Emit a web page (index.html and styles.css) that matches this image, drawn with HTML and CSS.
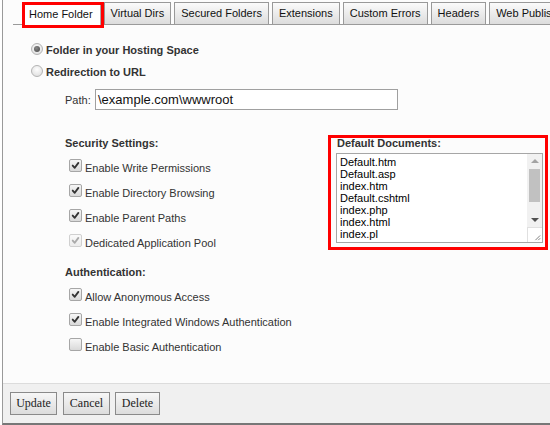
FILE: index.html
```html
<!DOCTYPE html>
<html>
<head>
<meta charset="utf-8">
<link rel="stylesheet" href="styles.css">
</head>
<body>
<div class="frame">
  <div class="tabs">
    <div class="tab active">Home Folder</div>
    <div class="tab">Virtual Dirs</div>
    <div class="tab">Secured Folders</div>
    <div class="tab">Extensions</div>
    <div class="tab">Custom Errors</div>
    <div class="tab">Headers</div>
    <div class="tab">Web Publishing</div>
  </div>
  <div class="content">
    <label class="opt"><span class="radio on"></span><b>Folder in your Hosting Space</b></label>
    <label class="opt"><span class="radio"></span><b>Redirection to URL</b></label>
    <div class="path"><span class="path-label">Path:</span><div class="input">\example.com\wwwroot</div></div>
    <div class="section">
      <div class="left">
        <div class="heading">Security Settings:</div>
        <div class="rows">
          <label class="chk"><span class="cb"><svg viewBox="0 0 13 13"><path d="M3.2 6.6 L5.6 9.2 L9.9 3.4" /></svg></span>Enable Write Permissions</label>
          <label class="chk"><span class="cb"><svg viewBox="0 0 13 13"><path d="M3.2 6.6 L5.6 9.2 L9.9 3.4" /></svg></span>Enable Directory Browsing</label>
          <label class="chk"><span class="cb"><svg viewBox="0 0 13 13"><path d="M3.2 6.6 L5.6 9.2 L9.9 3.4" /></svg></span>Enable Parent Paths</label>
          <label class="chk"><span class="cb disabled"><svg viewBox="0 0 13 13"><path d="M3.2 6.6 L5.6 9.2 L9.9 3.4" /></svg></span>Dedicated Application Pool</label>
        </div>
        <div class="heading auth">Authentication:</div>
        <div class="rows auth-rows">
          <label class="chk"><span class="cb"><svg viewBox="0 0 13 13"><path d="M3.2 6.6 L5.6 9.2 L9.9 3.4" /></svg></span>Allow Anonymous Access</label>
          <label class="chk"><span class="cb"><svg viewBox="0 0 13 13"><path d="M3.2 6.6 L5.6 9.2 L9.9 3.4" /></svg></span>Enable Integrated Windows Authentication</label>
          <label class="chk"><span class="cb off"></span>Enable Basic Authentication</label>
        </div>
      </div>
      <div class="docs">
        <div class="docs-title">Default Documents:</div>
        <div class="textarea">
          <div class="lines">
            <div>Default.htm</div>
            <div>Default.asp</div>
            <div>index.htm</div>
            <div>Default.cshtml</div>
            <div>index.php</div>
            <div>index.html</div>
            <div>index.pl</div>
          </div>
          <div class="scrollbar">
            <div class="sb-btn"><span class="arrow-up"></span></div>
            <div class="sb-track"><div class="sb-thumb"></div></div>
            <div class="sb-btn"><span class="arrow-down"></span></div>
            <div class="sb-corner"><svg viewBox="0 0 15 15"><path d="M13 8 L8 13 M13 11 L11 13" /></svg></div>
          </div>
        </div>
      </div>
    </div>
  </div>
  <div class="footer">
    <button class="btn b-update">Update</button>
    <button class="btn b-cancel">Cancel</button>
    <button class="btn b-delete">Delete</button>
  </div>
</div>
</body>
</html>
```
FILE: styles.css
```css
* { box-sizing: border-box; }
html, body { margin: 0; padding: 0; }
body {
  font-family: "Liberation Sans", Arial, sans-serif;
  font-size: 11px;
  color: #222;
  background: #fff;
  width: 550px;
  height: 425px;
  overflow: hidden;
}
.frame {
  margin-left: 2px;
  height: 425px;
  border-left: 1px solid #9a9a9a;
  border-bottom: 2px solid #777;
  background: #fcfcfc;
  display: flex;
  flex-direction: column;
  overflow: hidden;
}
.tabs {
  display: flex;
  align-items: flex-end;
  height: 25px;
  margin-left: 10px;
  border-bottom: 1px solid #9a9a9a;
  white-space: nowrap;
  flex-shrink: 0;
}
.tab {
  flex-shrink: 0;
  height: 22px;
  line-height: 21px;
  padding: 0 6px;
  margin-right: 3px;
  border: 1px solid #999;
  border-bottom: none;
  background: linear-gradient(#fbfbfb, #dcdcdc);
  color: #111;
}
.tab.active {
  height: 26px;
  margin-left: 9px;
  margin-right: 0;
  margin-bottom: -4px;
  border: 3px solid #f00;
  padding: 0 8px 0 4px;
  line-height: 18px;
  background: #fff;
  position: relative;
  z-index: 1;
  box-shadow: inset -1px 0 0 #aaa;
}
.content {
  flex: 1;
  padding: 14px 0 0 28px;
}
.opt {
  display: flex;
  align-items: center;
  height: 22px;
}
.opt b { color: #333; }
.radio {
  width: 12px;
  height: 12px;
  border-radius: 50%;
  border: 1px solid #b4b4b4;
  background: radial-gradient(circle at 50% 35%, #fdfdfd, #dadada);
  margin-right: 3px;
  margin-bottom: 3px;
  display: flex;
  align-items: center;
  justify-content: center;
}
.radio.on::after {
  content: "";
  width: 6px;
  height: 6px;
  border-radius: 50%;
  background: radial-gradient(circle at 40% 35%, #888, #444);
}
.path {
  display: flex;
  align-items: center;
  margin: 6px 0 0 34px;
  height: 21px;
}
.path-label { width: 30px; color: #333; }
.input {
  width: 303px;
  height: 21px;
  border: 1px solid #a0a0a0;
  background: #fff;
  font-size: 13px;
  line-height: 19px;
  padding-left: 2px;
  color: #111;
}
.section {
  display: flex;
  margin: 25px 0 0 34px;
}
.left { width: 263px; }
.heading {
  font-weight: bold;
  color: #333;
  height: 17px;
  line-height: 17px;
}
.rows { margin-top: 3px; }
.chk {
  display: flex;
  align-items: center;
  height: 25px;
  color: #333;
}
.cb {
  width: 13px;
  height: 13px;
  margin: 0 3px 4px 4px;
  border: 1px solid #a6a6a6;
  border-radius: 2px;
  background: linear-gradient(#f6f6f6, #d9d9d9);
  display: flex;
}
.cb svg { width: 11px; height: 11px; }
.cb svg path {
  fill: none;
  stroke: #333;
  stroke-width: 2.2;
  stroke-linecap: round;
  stroke-linejoin: round;
}
.cb.disabled { border-color: #d0d0d0; background: linear-gradient(#fafafa, #ececec); }
.cb.disabled svg path { stroke: #aaa; }
.heading.auth {
  margin-top: 9px;
  height: 16px;
  line-height: 16px;
}
.auth-rows { margin-top: 4px; }
.docs {
  width: 220px;
  border: 3px solid #f00;
  padding: 0 2px 4px 5px;
  align-self: flex-start;
}
.docs-title {
  font-weight: bold;
  color: #333;
  height: 15px;
  line-height: 11px;
  padding-left: 1px;
}
.textarea {
  width: 207px;
  height: 90px;
  border: 1px solid #a6a6a6;
  background: #fff;
  display: flex;
}
.lines {
  flex: 1;
  padding: 2px 0 0 3px;
  line-height: 12px;
  color: #000;
  overflow: hidden;
}
.scrollbar {
  width: 15px;
  display: flex;
  flex-direction: column;
  background: #f1f1f1;
}
.sb-btn {
  height: 14px;
  display: flex;
  align-items: center;
  justify-content: center;
}
.arrow-up {
  width: 0; height: 0;
  border-left: 4px solid transparent;
  border-right: 4px solid transparent;
  border-bottom: 4px solid #a3a3a3;
}
.arrow-down {
  width: 0; height: 0;
  border-left: 4px solid transparent;
  border-right: 4px solid transparent;
  border-top: 4px solid #505050;
}
.sb-track { flex: 1; padding: 1px 2px 0 2px; }
.sb-thumb { height: 33px; background: #c1c1c1; }
.sb-corner {
  height: 15px;
  background: #fff;
  border-top: 1px solid #e0e0e0;
  border-left: 1px solid #e0e0e0;
  display: flex;
}
.sb-corner svg { width: 14px; height: 14px; }
.sb-corner svg path { stroke: #777; stroke-width: 1; fill: none; }
.footer {
  height: 40px;
  flex-shrink: 0;
  border-top: 1px solid #dcdcdc;
  background: #f0f0f0;
  padding: 8px 0 0 7px;
  display: flex;
  align-items: flex-start;
}
.btn {
  height: 23px;
  padding: 0 4px;
  border: 1px solid #8a8a8a;
  background: linear-gradient(#f7f7f7, #dcdcdc);
  font-family: "Liberation Serif", "Times New Roman", serif;
  font-size: 12px;
  color: #222;
  line-height: 21px;
}
.b-update { width: 47px; margin-right: 6px; }
.b-cancel { width: 47px; margin-right: 5px; }
.b-delete { width: 45px; }
```
